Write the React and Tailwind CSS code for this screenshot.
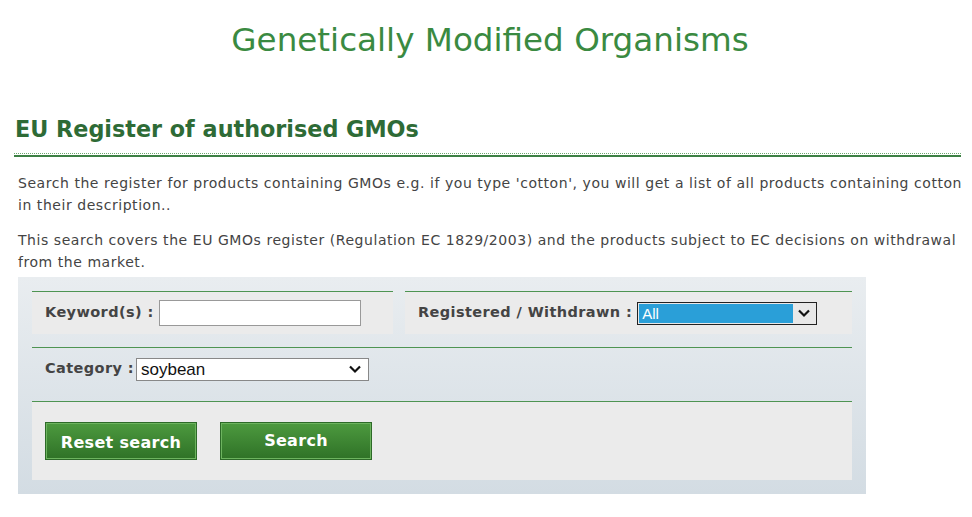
import React, { useState } from "react";

const font = { fontFamily: "'DejaVu Sans', Verdana, sans-serif" };

const Chevron = () => (
  <svg width="14" height="10" viewBox="0 0 14 10" className="shrink-0">
    <path d="M2 2.5 L7 7.5 L12 2.5" fill="none" stroke="#111" strokeWidth="2.2" />
  </svg>
);

const App = () => {
  const [keyword, setKeyword] = useState("");

  return (
    <div className="w-[972px] h-[517px] bg-white text-[#444] overflow-hidden" style={font}>
      <h1 className="pt-[18px] text-center text-[32.6px] leading-[44px] text-[#3a8a41] pl-[8px]">
        Genetically Modified Organisms
      </h1>

      <div className="pl-[14px] pr-[11px] mt-[52px]">
        <h2 className="pl-[1px] text-[22.3px] leading-[30px] font-bold text-[#2e6b36]">
          EU Register of authorised GMOs
        </h2>
        <div className="mt-[9px] border-t border-dotted border-[#6aa86e]" />
        <div className="mt-[1px] border-t-2 border-[#3d8044]" />
      </div>

      <div className="pl-[18px] text-[14px] leading-[22px] tracking-[0.55px] whitespace-nowrap">
        <p className="mt-[15px]">
          <span className="block">Search the register for products containing GMOs e.g. if you type 'cotton', you will get a list of all products containing cotton</span>
          <span className="block">in their description..</span>
        </p>
        <p className="mt-[13px]">
          <span className="block">This search covers the EU GMOs register (Regulation EC 1829/2003) and the products subject to EC decisions on withdrawal</span>
          <span className="block">from the market.</span>
        </p>
      </div>

      <div className="ml-[18px] mt-[4px] w-[848px] h-[217px] pt-[14px] px-[14px] bg-gradient-to-b from-[#e9edf0] to-[#d3dce3]">
        {/* row 1 */}
        <div className="flex gap-[12px]">
          <div className="w-[361px] h-[43px] flex items-center pl-[13px] bg-[#ebebeb] border-t border-[#4e9452]">
            <span className="text-[14.5px] tracking-[0.4px] font-bold text-[#444] mr-[5px]">Keyword(s) :</span>
            <input
              value={keyword}
              onChange={e => setKeyword(e.target.value)}
              className="w-[202px] h-[26px] bg-white border border-[#999] outline-none px-1 text-[14px]"
            />
          </div>
          <div className="flex-1 h-[43px] flex items-center pl-[13px] bg-[#ebebeb] border-t border-[#4e9452]">
            <span className="text-[14.5px] tracking-[0.4px] font-bold text-[#444] mr-[5px]">Registered / Withdrawn :</span>
            <div className="w-[180px] h-[23px] flex items-center bg-[#e8e8e8] border border-[#222] p-[1px]">
              <span className="flex-1 h-full bg-[#2a9fd8] text-white text-[15px] leading-[19px] pl-[3px]" style={{ fontFamily: "'Liberation Sans', Arial, sans-serif" }}>All</span>
              <span className="w-[22px] flex justify-center"><Chevron /></span>
            </div>
          </div>
        </div>

        {/* row 2 */}
        <div className="mt-[13px] h-[54px] flex items-center pl-[13px] border-t border-[#4e9452] pb-[11px]">
          <span className="text-[14.5px] tracking-[0.4px] font-bold text-[#444] mr-[2px]">Category :</span>
          <div className="w-[233px] h-[23px] flex items-center bg-white border border-[#888]">
            <span className="flex-1 text-[#111] text-[17px] leading-[21px] pl-[4px]" style={{ fontFamily: "'Liberation Sans', Arial, sans-serif" }}>soybean</span>
            <span className="w-[26px] flex justify-center"><Chevron /></span>
          </div>
        </div>

        {/* row 3 */}
        <div className="h-[79px] flex items-center gap-[23px] pl-[13px] bg-[#ebebeb] border-t border-[#4e9452]">
          <button className="w-[152px] h-[38px] text-white font-bold text-[16px] tracking-[0.3px] pt-[4px] border border-[#2d6a28] bg-gradient-to-b from-[#4d9a3f] to-[#2f7227] shadow-[inset_0_0_0_1px_#6db35f]">
            Reset search
          </button>
          <button className="w-[152px] h-[38px] text-white font-bold text-[16px] tracking-[0.3px] pb-[1px] border border-[#2d6a28] bg-gradient-to-b from-[#4d9a3f] to-[#2f7227] shadow-[inset_0_0_0_1px_#6db35f]">
            Search
          </button>
        </div>
      </div>
    </div>
  );
};

export default App;
